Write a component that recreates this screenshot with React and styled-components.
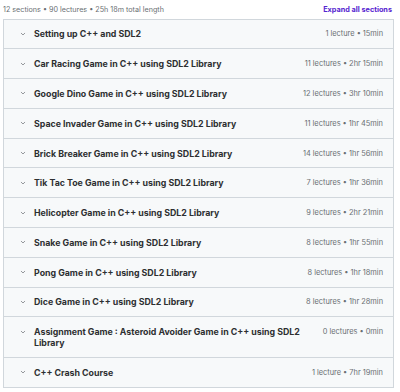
import React from 'react';
import styled, { createGlobalStyle } from 'styled-components';

const GlobalStyle = createGlobalStyle`
  body {
    margin: 0;
    background: #ffffff;
    font-family: Inter, "Noto Sans", sans-serif;
    color: #2d2f31;
  }
`;

const sections = [
  { title: 'Setting up C++ and SDL2', meta: '1 lecture • 15min' },
  { title: 'Car Racing Game in C++ using SDL2 Library', meta: '11 lectures • 2hr 15min' },
  { title: 'Google Dino Game in C++ using SDL2 Library', meta: '12 lectures • 3hr 10min' },
  { title: 'Space Invader Game in C++ using SDL2 Library', meta: '11 lectures • 1hr 45min' },
  { title: 'Brick Breaker Game in C++ using SDL2 Library', meta: '14 lectures • 1hr 56min' },
  { title: 'Tik Tac Toe Game in C++ using SDL2 Library', meta: '7 lectures • 1hr 36min' },
  { title: 'Helicopter Game in C++ using SDL2 Library', meta: '9 lectures • 2hr 21min' },
  { title: 'Snake Game in C++ using SDL2 Library', meta: '8 lectures • 1hr 55min' },
  { title: 'Pong Game in C++ using SDL2 Library', meta: '8 lectures • 1hr 18min' },
  { title: 'Dice Game in C++ using SDL2 Library', meta: '8 lectures • 1hr 28min' },
  { title: 'Assignment Game : Asteroid Avoider Game in C++ using SDL2 Library', meta: '0 lectures • 0min' },
  { title: 'C++ Crash Course', meta: '1 lecture • 7hr 19min' },
];

const Wrapper = styled.div`
  padding: 0 6px 0 3px;
`;

const Header = styled.div`
  display: flex;
  align-items: center;
  justify-content: space-between;
  height: 18.5px;
`;

const Summary = styled.span`
  font-size: 7.2px;
  color: #6a6f73;
`;

const ExpandLink = styled.a`
  font-size: 7.3px;
  font-weight: 700;
  color: #5624d0;
  text-decoration: none;
  margin-right: 2px;
`;

const Panel = styled.div`
  border: 1px solid #d1d7dc;
  border-bottom: none;
`;

const Row = styled.div`
  display: flex;
  align-items: flex-start;
  background: #f7f9fa;
  border-bottom: 1px solid #d1d7dc;
  padding: 8.9px 10px 8.9px 15px;
`;

const Chevron = styled.svg`
  width: 8px;
  height: 8px;
  flex-shrink: 0;
  margin: 1.5px 7px 0 0;
  color: #6a6f73;
`;

const Title = styled.span`
  flex: 1;
  font-size: 8.8px;
  font-weight: 700;
  line-height: 11px;
  color: #2d2f31;
  padding-right: 20px;
`;

const Meta = styled.span`
  font-size: 7.4px;
  line-height: 11px;
  color: #6a6f73;
  white-space: nowrap;
`;

export default function App() {
  return (
    <>
      <GlobalStyle />
      <Wrapper>
        <Header>
          <Summary>12 sections • 90 lectures • 25h 18m total length</Summary>
          <ExpandLink href="#">Expand all sections</ExpandLink>
        </Header>
        <Panel>
          {sections.map((s) => (
            <Row key={s.title}>
              <Chevron viewBox="0 0 16 16" fill="none">
                <path d="M4.5 6.5 L8 10 L11.5 6.5" stroke="currentColor" strokeWidth="1.4" strokeLinecap="round" strokeLinejoin="round" />
              </Chevron>
              <Title>{s.title}</Title>
              <Meta>{s.meta}</Meta>
            </Row>
          ))}
        </Panel>
      </Wrapper>
    </>
  );
}
